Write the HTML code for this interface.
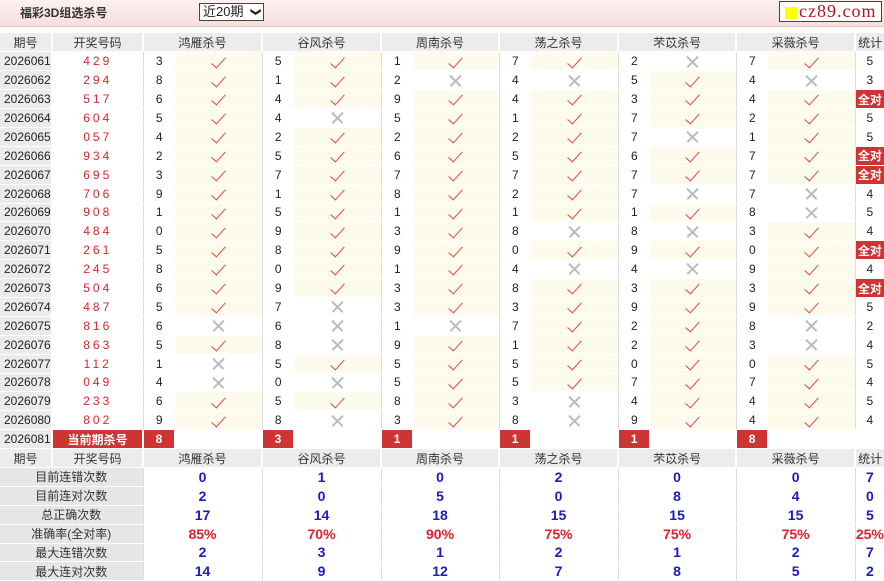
<!DOCTYPE html>
<html><head><meta charset="utf-8">
<style>
*{margin:0;padding:0;box-sizing:border-box}
body{width:884px;height:581px;overflow:hidden;background:#fff;font-family:"Liberation Sans","Noto Sans CJK SC",sans-serif;font-size:12px;color:#222}
.top{position:absolute;left:0;top:0;width:884px;height:27px;background:linear-gradient(#fdf1f1,#f6dede);border-bottom:1px solid #e6c4c4}
.title{position:absolute;left:20px;top:4px;font-size:12px;font-weight:bold;color:#333}
.sel{position:absolute;left:199px;top:3px;width:65px;height:18px;border:1px solid #444;background:#fff;font-size:13px;line-height:16px;padding-left:3px}
.sel b{position:absolute;right:4px;top:0;font-size:10px;transform:rotate(90deg)}
.logo{position:absolute;left:779px;top:1px;width:103px;height:21px;border:1px solid #9a1b2b;background:#fff}
.logo i{position:absolute;left:5px;top:5px;width:12px;height:12px;background:#ff0}
.logo span{position:absolute;left:19px;top:-1px;font-family:"Liberation Serif",serif;font-size:18px;color:#b0142a;letter-spacing:1px}
table{position:absolute;left:0;top:33px;width:884px;border-collapse:collapse;table-layout:fixed}
td,th{height:18.9px;padding:0;text-align:center;font-weight:normal;border-bottom:1px solid #fff;white-space:nowrap;overflow:hidden}
th{background:#ececec;color:#333}
th.g{border-left:2px solid #fff}
td.q{background:#ebebeb;text-align:left;padding-left:4px;border-right:2px solid #fff}
td.k{color:#d8262f;letter-spacing:3px}
td.n{border-left:1px solid #ddd}
td.y{background:#fdfcec}
td.s{border-left:1px solid #ddd}
td.a{background:#cf3434;color:#fff;font-weight:bold;border-left:1px solid #ddd}
td.r{background:#cf3434;color:#fff;font-weight:bold;border:1px solid #fff;border-width:1px 2px 1px 2px}
i.c{display:inline-block;width:7px;height:14px;border:solid #e2434f;border-width:0 1.8px 1.8px 0;transform:rotate(42deg);margin-top:-3px;vertical-align:middle}
i.x{display:inline-block;position:relative;width:13px;height:13px;vertical-align:middle;margin-top:-2px}
i.x:before,i.x:after{content:"";position:absolute;left:-1px;top:6px;width:15px;height:1.5px;background:#bbb;transform:rotate(45deg)}
i.x:after{transform:rotate(-45deg)}
td.l{background:#e6e6e6;color:#333}
td.v{color:#1a1ac8;font-weight:bold;font-size:14px;border-left:1px solid #ddd}
td.p{color:#e0202a;font-weight:bold;font-size:14px;border-left:1px solid #ddd}
</style></head><body>
<div class="top"><div class="title">福彩3D组选杀号</div><div class="sel">近20期<b>&#10095;</b></div><div class="logo"><i></i><span>cz89.com</span></div></div>
<table>
<colgroup><col style="width:52px"><col style="width:91px"><col style="width:32px"><col style="width:87px"><col style="width:32px"><col style="width:87px"><col style="width:32px"><col style="width:86px"><col style="width:32px"><col style="width:87px"><col style="width:32px"><col style="width:86px"><col style="width:32px"><col style="width:87px"><col style="width:29px"></colgroup>
<tr><th>期号</th><th class="g">开奖号码</th><th class="g" colspan="2">鸿雁杀号</th><th class="g" colspan="2">谷风杀号</th><th class="g" colspan="2">周南杀号</th><th class="g" colspan="2">荡之杀号</th><th class="g" colspan="2">芣苡杀号</th><th class="g" colspan="2">采薇杀号</th><th class="g">统计</th></tr>
<tr><td class="q">2026061</td><td class="k">429</td><td class="n">3</td><td class="y"><i class="c"></i></td><td class="n">5</td><td class="y"><i class="c"></i></td><td class="n">1</td><td class="y"><i class="c"></i></td><td class="n">7</td><td class="y"><i class="c"></i></td><td class="n">2</td><td><i class="x"></i></td><td class="n">7</td><td class="y"><i class="c"></i></td><td class="s">5</td></tr>
<tr><td class="q">2026062</td><td class="k">294</td><td class="n">8</td><td class="y"><i class="c"></i></td><td class="n">1</td><td class="y"><i class="c"></i></td><td class="n">2</td><td><i class="x"></i></td><td class="n">4</td><td><i class="x"></i></td><td class="n">5</td><td class="y"><i class="c"></i></td><td class="n">4</td><td><i class="x"></i></td><td class="s">3</td></tr>
<tr><td class="q">2026063</td><td class="k">517</td><td class="n">6</td><td class="y"><i class="c"></i></td><td class="n">4</td><td class="y"><i class="c"></i></td><td class="n">9</td><td class="y"><i class="c"></i></td><td class="n">4</td><td class="y"><i class="c"></i></td><td class="n">3</td><td class="y"><i class="c"></i></td><td class="n">4</td><td class="y"><i class="c"></i></td><td class="a">全对</td></tr>
<tr><td class="q">2026064</td><td class="k">604</td><td class="n">5</td><td class="y"><i class="c"></i></td><td class="n">4</td><td><i class="x"></i></td><td class="n">5</td><td class="y"><i class="c"></i></td><td class="n">1</td><td class="y"><i class="c"></i></td><td class="n">7</td><td class="y"><i class="c"></i></td><td class="n">2</td><td class="y"><i class="c"></i></td><td class="s">5</td></tr>
<tr><td class="q">2026065</td><td class="k">057</td><td class="n">4</td><td class="y"><i class="c"></i></td><td class="n">2</td><td class="y"><i class="c"></i></td><td class="n">2</td><td class="y"><i class="c"></i></td><td class="n">2</td><td class="y"><i class="c"></i></td><td class="n">7</td><td><i class="x"></i></td><td class="n">1</td><td class="y"><i class="c"></i></td><td class="s">5</td></tr>
<tr><td class="q">2026066</td><td class="k">934</td><td class="n">2</td><td class="y"><i class="c"></i></td><td class="n">5</td><td class="y"><i class="c"></i></td><td class="n">6</td><td class="y"><i class="c"></i></td><td class="n">5</td><td class="y"><i class="c"></i></td><td class="n">6</td><td class="y"><i class="c"></i></td><td class="n">7</td><td class="y"><i class="c"></i></td><td class="a">全对</td></tr>
<tr><td class="q">2026067</td><td class="k">695</td><td class="n">3</td><td class="y"><i class="c"></i></td><td class="n">7</td><td class="y"><i class="c"></i></td><td class="n">7</td><td class="y"><i class="c"></i></td><td class="n">7</td><td class="y"><i class="c"></i></td><td class="n">7</td><td class="y"><i class="c"></i></td><td class="n">7</td><td class="y"><i class="c"></i></td><td class="a">全对</td></tr>
<tr><td class="q">2026068</td><td class="k">706</td><td class="n">9</td><td class="y"><i class="c"></i></td><td class="n">1</td><td class="y"><i class="c"></i></td><td class="n">8</td><td class="y"><i class="c"></i></td><td class="n">2</td><td class="y"><i class="c"></i></td><td class="n">7</td><td><i class="x"></i></td><td class="n">7</td><td><i class="x"></i></td><td class="s">4</td></tr>
<tr><td class="q">2026069</td><td class="k">908</td><td class="n">1</td><td class="y"><i class="c"></i></td><td class="n">5</td><td class="y"><i class="c"></i></td><td class="n">1</td><td class="y"><i class="c"></i></td><td class="n">1</td><td class="y"><i class="c"></i></td><td class="n">1</td><td class="y"><i class="c"></i></td><td class="n">8</td><td><i class="x"></i></td><td class="s">5</td></tr>
<tr><td class="q">2026070</td><td class="k">484</td><td class="n">0</td><td class="y"><i class="c"></i></td><td class="n">9</td><td class="y"><i class="c"></i></td><td class="n">3</td><td class="y"><i class="c"></i></td><td class="n">8</td><td><i class="x"></i></td><td class="n">8</td><td><i class="x"></i></td><td class="n">3</td><td class="y"><i class="c"></i></td><td class="s">4</td></tr>
<tr><td class="q">2026071</td><td class="k">261</td><td class="n">5</td><td class="y"><i class="c"></i></td><td class="n">8</td><td class="y"><i class="c"></i></td><td class="n">9</td><td class="y"><i class="c"></i></td><td class="n">0</td><td class="y"><i class="c"></i></td><td class="n">9</td><td class="y"><i class="c"></i></td><td class="n">0</td><td class="y"><i class="c"></i></td><td class="a">全对</td></tr>
<tr><td class="q">2026072</td><td class="k">245</td><td class="n">8</td><td class="y"><i class="c"></i></td><td class="n">0</td><td class="y"><i class="c"></i></td><td class="n">1</td><td class="y"><i class="c"></i></td><td class="n">4</td><td><i class="x"></i></td><td class="n">4</td><td><i class="x"></i></td><td class="n">9</td><td class="y"><i class="c"></i></td><td class="s">4</td></tr>
<tr><td class="q">2026073</td><td class="k">504</td><td class="n">6</td><td class="y"><i class="c"></i></td><td class="n">9</td><td class="y"><i class="c"></i></td><td class="n">3</td><td class="y"><i class="c"></i></td><td class="n">8</td><td class="y"><i class="c"></i></td><td class="n">3</td><td class="y"><i class="c"></i></td><td class="n">3</td><td class="y"><i class="c"></i></td><td class="a">全对</td></tr>
<tr><td class="q">2026074</td><td class="k">487</td><td class="n">5</td><td class="y"><i class="c"></i></td><td class="n">7</td><td><i class="x"></i></td><td class="n">3</td><td class="y"><i class="c"></i></td><td class="n">3</td><td class="y"><i class="c"></i></td><td class="n">9</td><td class="y"><i class="c"></i></td><td class="n">9</td><td class="y"><i class="c"></i></td><td class="s">5</td></tr>
<tr><td class="q">2026075</td><td class="k">816</td><td class="n">6</td><td><i class="x"></i></td><td class="n">6</td><td><i class="x"></i></td><td class="n">1</td><td><i class="x"></i></td><td class="n">7</td><td class="y"><i class="c"></i></td><td class="n">2</td><td class="y"><i class="c"></i></td><td class="n">8</td><td><i class="x"></i></td><td class="s">2</td></tr>
<tr><td class="q">2026076</td><td class="k">863</td><td class="n">5</td><td class="y"><i class="c"></i></td><td class="n">8</td><td><i class="x"></i></td><td class="n">9</td><td class="y"><i class="c"></i></td><td class="n">1</td><td class="y"><i class="c"></i></td><td class="n">2</td><td class="y"><i class="c"></i></td><td class="n">3</td><td><i class="x"></i></td><td class="s">4</td></tr>
<tr><td class="q">2026077</td><td class="k">112</td><td class="n">1</td><td><i class="x"></i></td><td class="n">5</td><td class="y"><i class="c"></i></td><td class="n">5</td><td class="y"><i class="c"></i></td><td class="n">5</td><td class="y"><i class="c"></i></td><td class="n">0</td><td class="y"><i class="c"></i></td><td class="n">0</td><td class="y"><i class="c"></i></td><td class="s">5</td></tr>
<tr><td class="q">2026078</td><td class="k">049</td><td class="n">4</td><td><i class="x"></i></td><td class="n">0</td><td><i class="x"></i></td><td class="n">5</td><td class="y"><i class="c"></i></td><td class="n">5</td><td class="y"><i class="c"></i></td><td class="n">7</td><td class="y"><i class="c"></i></td><td class="n">7</td><td class="y"><i class="c"></i></td><td class="s">4</td></tr>
<tr><td class="q">2026079</td><td class="k">233</td><td class="n">6</td><td class="y"><i class="c"></i></td><td class="n">5</td><td class="y"><i class="c"></i></td><td class="n">8</td><td class="y"><i class="c"></i></td><td class="n">3</td><td><i class="x"></i></td><td class="n">4</td><td class="y"><i class="c"></i></td><td class="n">4</td><td class="y"><i class="c"></i></td><td class="s">5</td></tr>
<tr><td class="q">2026080</td><td class="k">802</td><td class="n">9</td><td class="y"><i class="c"></i></td><td class="n">8</td><td><i class="x"></i></td><td class="n">3</td><td class="y"><i class="c"></i></td><td class="n">8</td><td><i class="x"></i></td><td class="n">9</td><td class="y"><i class="c"></i></td><td class="n">4</td><td class="y"><i class="c"></i></td><td class="s">4</td></tr>
<tr><td class="q">2026081</td><td class="r">当前期杀号</td><td class="r">8</td><td></td><td class="r">3</td><td></td><td class="r">1</td><td></td><td class="r">1</td><td></td><td class="r">1</td><td></td><td class="r">8</td><td></td><td></td></tr>
<tr><th>期号</th><th class="g">开奖号码</th><th class="g" colspan="2">鸿雁杀号</th><th class="g" colspan="2">谷风杀号</th><th class="g" colspan="2">周南杀号</th><th class="g" colspan="2">荡之杀号</th><th class="g" colspan="2">芣苡杀号</th><th class="g" colspan="2">采薇杀号</th><th class="g">统计</th></tr>
<tr><td class="l" colspan="2">目前连错次数</td><td class="v" colspan="2">0</td><td class="v" colspan="2">1</td><td class="v" colspan="2">0</td><td class="v" colspan="2">2</td><td class="v" colspan="2">0</td><td class="v" colspan="2">0</td><td class="v">7</td></tr>
<tr><td class="l" colspan="2">目前连对次数</td><td class="v" colspan="2">2</td><td class="v" colspan="2">0</td><td class="v" colspan="2">5</td><td class="v" colspan="2">0</td><td class="v" colspan="2">8</td><td class="v" colspan="2">4</td><td class="v">0</td></tr>
<tr><td class="l" colspan="2">总正确次数</td><td class="v" colspan="2">17</td><td class="v" colspan="2">14</td><td class="v" colspan="2">18</td><td class="v" colspan="2">15</td><td class="v" colspan="2">15</td><td class="v" colspan="2">15</td><td class="v">5</td></tr>
<tr><td class="l" colspan="2">准确率(全对率)</td><td class="p" colspan="2">85%</td><td class="p" colspan="2">70%</td><td class="p" colspan="2">90%</td><td class="p" colspan="2">75%</td><td class="p" colspan="2">75%</td><td class="p" colspan="2">75%</td><td class="p">25%</td></tr>
<tr><td class="l" colspan="2">最大连错次数</td><td class="v" colspan="2">2</td><td class="v" colspan="2">3</td><td class="v" colspan="2">1</td><td class="v" colspan="2">2</td><td class="v" colspan="2">1</td><td class="v" colspan="2">2</td><td class="v">7</td></tr>
<tr><td class="l" colspan="2">最大连对次数</td><td class="v" colspan="2">14</td><td class="v" colspan="2">9</td><td class="v" colspan="2">12</td><td class="v" colspan="2">7</td><td class="v" colspan="2">8</td><td class="v" colspan="2">5</td><td class="v">2</td></tr>
</table>
</body></html>
